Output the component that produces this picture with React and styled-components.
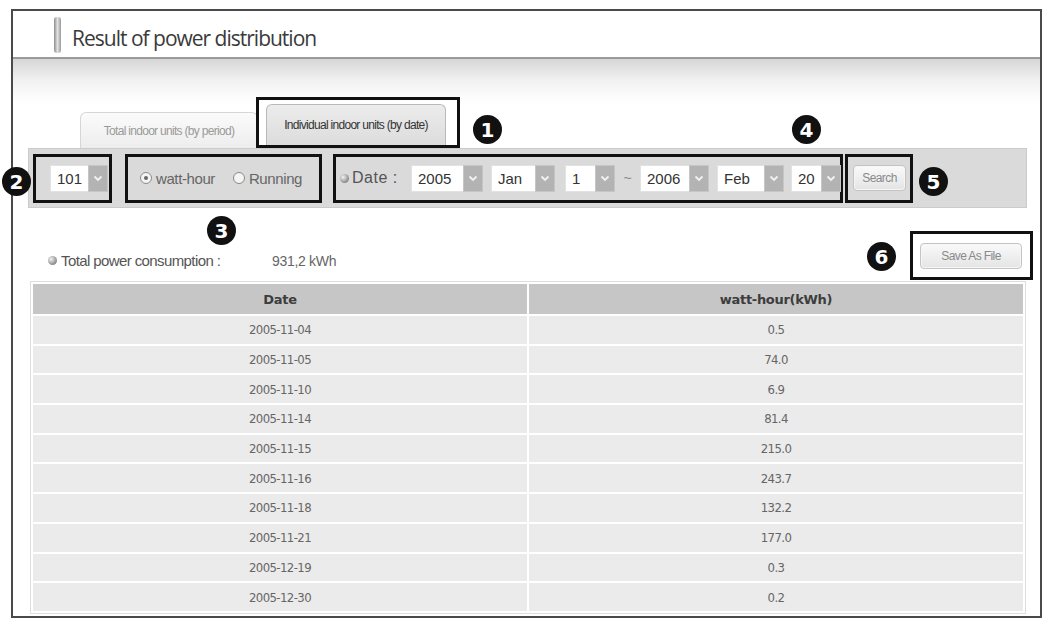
import React from 'react';
import styled, { createGlobalStyle } from 'styled-components';

const rows = [
  ['2005-11-04', '0.5'],
  ['2005-11-05', '74.0'],
  ['2005-11-10', '6.9'],
  ['2005-11-14', '81.4'],
  ['2005-11-15', '215.0'],
  ['2005-11-16', '243.7'],
  ['2005-11-18', '132.2'],
  ['2005-11-21', '177.0'],
  ['2005-12-19', '0.3'],
  ['2005-12-30', '0.2'],
];

// callout numbers placed over the page
const markers = [
  { n: 1, x: 460, y: 104 },
  { n: 2, x: -11, y: 156 },
  { n: 3, x: 194, y: 205 },
  { n: 4, x: 779, y: 104 },
  { n: 5, x: 906, y: 156 },
  { n: 6, x: 854, y: 231 },
];

function Chevron() {
  return (
    <svg width="10" height="7" viewBox="0 0 10 7">
      <path d="M1.5 1.5 L5 5 L8.5 1.5" fill="none" stroke="#f2f2f2" strokeWidth="1.8" />
    </svg>
  );
}

function Select({ value, width, gap = 0 }) {
  return (
    <SelectBox $ml={gap}>
      <SelectValue $w={width}>{value}</SelectValue>
      <SelectArrow>
        <Chevron />
      </SelectArrow>
    </SelectBox>
  );
}

function App() {
  return (
    <Page>
      <GlobalStyle />
      <Frame>
        <TitleBar>
          <TitleMark />
          <Title>Result of power distribution</Title>
        </TitleBar>
        <Body>
          <TabRow>
            <Tab>Total indoor units (by period)</Tab>
            <TabCallout>
              <Tab $active>Individual indoor units (by date)</Tab>
            </TabCallout>
          </TabRow>

          <Toolbar>
            <Callout $w={79} $ml={4} $pl={14}>
              <Select value="101" width={38} />
            </Callout>
            <Callout $w={197} $ml={13} $pl={12}>
              <Radio $checked />
              <RadioLabel $mr={18}>watt-hour</RadioLabel>
              <Radio />
              <RadioLabel>Running</RadioLabel>
            </Callout>
            <Callout $w={510} $ml={11} $pl={4}>
              <Bullet />
              <DateLabel>Date :</DateLabel>
              <Select value="2005" width={52} />
              <Select value="Jan" width={44} gap={8} />
              <Select value="1" width={30} gap={10} />
              <Tilde>~</Tilde>
              <Select value="2006" width={49} />
              <Select value="Feb" width={47} gap={8} />
              <Select value="20" width={30} gap={7} />
            </Callout>
            <Callout $w={68} $ml={2} $pl={5}>
              <GrayButton $w={53}>Search</GrayButton>
            </Callout>
          </Toolbar>

          <SummaryRow>
            <Summary>
              <Bullet />
              <SummaryLabel>Total power consumption :</SummaryLabel>
              <SummaryValue>931,2 kWh</SummaryValue>
            </Summary>
            <SaveCallout>
              <GrayButton $w={102}>Save As File</GrayButton>
            </SaveCallout>
          </SummaryRow>

          <Table>
            <thead>
              <tr>
                <Th>Date</Th>
                <Th>watt-hour(kWh)</Th>
              </tr>
            </thead>
            <tbody>
              {rows.map(([date, value]) => (
                <tr key={date}>
                  <Td>{date}</Td>
                  <Td>{value}</Td>
                </tr>
              ))}
            </tbody>
          </Table>
        </Body>

        {markers.map((m) => (
          <Marker key={m.n} $x={m.x} $y={m.y}>
            {m.n}
          </Marker>
        ))}
      </Frame>
    </Page>
  );
}

export default App;

const GlobalStyle = createGlobalStyle`
  body {
    margin: 0;
    background: #fff;
    font-family: "Liberation Sans", Arial, sans-serif;
  }
`;

const Page = styled.div`
  width: 1048px;
  height: 621px;
  overflow: hidden;
  padding: 9px 0 0 11px;
  box-sizing: border-box;
  background: #fff;
`;

const Frame = styled.div`
  position: relative;
  width: 1031px;
  height: 609px;
  box-sizing: border-box;
  border: 2px solid #4a4a4a;
  display: flex;
  flex-direction: column;
`;

const TitleBar = styled.div`
  height: 46px;
  flex-shrink: 0;
  border-bottom: 2px solid #9a9a9a;
  display: flex;
  align-items: center;
  padding-left: 41px;
  background: #fff;
`;

const TitleMark = styled.div`
  width: 7px;
  height: 36px;
  margin-top: 1px;
  border-radius: 3px;
  background: linear-gradient(90deg, #8c8c8c, #e2e2e2 50%, #9a9a9a);
`;

const Title = styled.h1`
  margin: 8px 0 0 11px;
  font-family: "Open Sans", sans-serif;
  font-weight: 400;
  font-size: 21px;
  letter-spacing: -1px;
  color: #3a3a3a;
`;

const Body = styled.div`
  flex: 1;
  min-height: 0;
  overflow: hidden;
  padding: 38px 13px 0 15px;
  background: linear-gradient(to bottom, #d6d6d6 0px, #f2f2f2 22px, #fff 44px);
`;

const TabRow = styled.div`
  display: flex;
  align-items: flex-end;
  height: 51px;
  padding-left: 52px;
`;

const Tab = styled.div`
  width: ${(p) => (p.$active ? 180 : 178)}px;
  height: ${(p) => (p.$active ? 41 : 36)}px;
  box-sizing: border-box;
  border: 1px solid ${(p) => (p.$active ? '#b9b9b9' : '#d6d6d6')};
  border-bottom: none;
  border-radius: 6px 6px 0 0;
  background: ${(p) =>
    p.$active
      ? 'linear-gradient(#ececec, #dcdcdc)'
      : 'linear-gradient(#fbfbfb, #ededed)'};
  display: flex;
  align-items: center;
  justify-content: center;
  font-size: 12px;
  letter-spacing: -0.7px;
  color: ${(p) => (p.$active ? '#333' : '#9a9a9a')};
  white-space: nowrap;
`;

const TabCallout = styled.div`
  margin-left: -2px;
  height: 51px;
  box-sizing: border-box;
  border: 3px solid #111;
  padding: 4px 11px 0 7px;
  display: flex;
  align-items: flex-end;
`;

const Toolbar = styled.div`
  width: 999px;
  height: 60px;
  box-sizing: border-box;
  background: #dadada;
  border: 1px solid #cbcbcb;
  display: flex;
  align-items: center;
`;

const Callout = styled.div`
  width: ${(p) => p.$w}px;
  height: 49px;
  margin-left: ${(p) => p.$ml}px;
  padding-left: ${(p) => p.$pl}px;
  box-sizing: border-box;
  border: 3px solid #111;
  display: flex;
  align-items: center;
  flex-shrink: 0;
  white-space: nowrap;
`;

const SelectBox = styled.div`
  display: flex;
  height: 27px;
  margin-left: ${(p) => p.$ml}px;
  flex-shrink: 0;
`;

const SelectValue = styled.div`
  width: ${(p) => p.$w}px;
  box-sizing: border-box;
  background: #fff;
  border: 1px solid #e2e2e2;
  border-right: none;
  padding-left: 6px;
  display: flex;
  align-items: center;
  font-size: 15px;
  color: #333;
`;

const SelectArrow = styled.div`
  width: 20px;
  background: #b3b3b3;
  border: 1px solid #c6c6c6;
  box-sizing: border-box;
  display: flex;
  align-items: center;
  justify-content: center;
`;

const Radio = styled.span`
  width: 12px;
  height: 12px;
  flex-shrink: 0;
  box-sizing: border-box;
  border-radius: 50%;
  border: 1px solid #8a8a8a;
  background: #f4f4f4;
  display: flex;
  align-items: center;
  justify-content: center;

  &::after {
    content: '';
    display: ${(p) => (p.$checked ? 'block' : 'none')};
    width: 4px;
    height: 4px;
    border-radius: 50%;
    background: #666;
  }
`;

const RadioLabel = styled.span`
  margin: 0 ${(p) => p.$mr || 0}px 0 4px;
  font-size: 15px;
  letter-spacing: -0.4px;
  color: #666;
`;

const Bullet = styled.span`
  width: 9px;
  height: 9px;
  border-radius: 50%;
  flex-shrink: 0;
  background: radial-gradient(circle at 35% 35%, #f2f2f2, #8a8a8a 70%, #666);
`;

const DateLabel = styled.span`
  width: 59px;
  flex-shrink: 0;
  margin-left: 3px;
  font-size: 16px;
  color: #555;
  letter-spacing: 0.5px;
`;

const Tilde = styled.span`
  width: 25px;
  flex-shrink: 0;
  text-align: center;
  font-size: 14px;
  color: #888;
`;

const GrayButton = styled.div`
  width: ${(p) => p.$w}px;
  height: 26px;
  box-sizing: border-box;
  border: 1px solid #c4c4c4;
  border-radius: 4px;
  background: linear-gradient(#fafafa, #e4e4e4);
  box-shadow: inset 0 0 0 1px #f6f6f6;
  display: flex;
  align-items: center;
  justify-content: center;
  font-size: 12px;
  letter-spacing: -0.6px;
  color: #8a8a8a;
`;

const SummaryRow = styled.div`
  height: 73px;
  display: flex;
  align-items: flex-end;
  justify-content: space-between;
`;

const Summary = styled.div`
  display: flex;
  align-items: center;
  padding-left: 20px;
  margin-bottom: 12px;
`;

const SummaryLabel = styled.span`
  margin-left: 4px;
  width: 211px;
  font-size: 15px;
  letter-spacing: -0.6px;
  color: #555;
`;

const SummaryValue = styled.span`
  font-size: 14px;
  letter-spacing: -0.3px;
  color: #666;
`;

const SaveCallout = styled.div`
  width: 123px;
  height: 49px;
  margin-right: -6px;
  margin-bottom: 1px;
  box-sizing: border-box;
  border: 3px solid #111;
  display: flex;
  align-items: center;
  padding-left: 7px;
`;

const Table = styled.table`
  width: 996px;
  margin-left: 2px;
  border-collapse: separate;
  border-spacing: 2px;
  border: 1px solid #dedede;
  background: #fff;
`;

const Th = styled.th`
  height: 30px;
  padding: 0;
  width: 50%;
  background: #c6c6c6;
  font-family: "DejaVu Sans", sans-serif;
  font-size: 13px;
  font-weight: bold;
  color: #3d3d3d;
  letter-spacing: -0.3px;
`;

const Td = styled.td`
  height: 27.7px;
  padding: 0;
  text-align: center;
  background: #ebebeb;
  font-family: "DejaVu Sans Condensed", "DejaVu Sans", sans-serif;
  font-size: 13px;
  letter-spacing: -0.6px;
  color: #666;
`;

const Marker = styled.span`
  position: absolute;
  left: ${(p) => p.$x}px;
  top: ${(p) => p.$y}px;
  width: 29px;
  height: 29px;
  border-radius: 50%;
  background: #111;
  color: #fff;
  display: flex;
  align-items: center;
  justify-content: center;
  font-family: "DejaVu Sans", sans-serif;
  font-weight: bold;
  font-size: 20px;
`;
